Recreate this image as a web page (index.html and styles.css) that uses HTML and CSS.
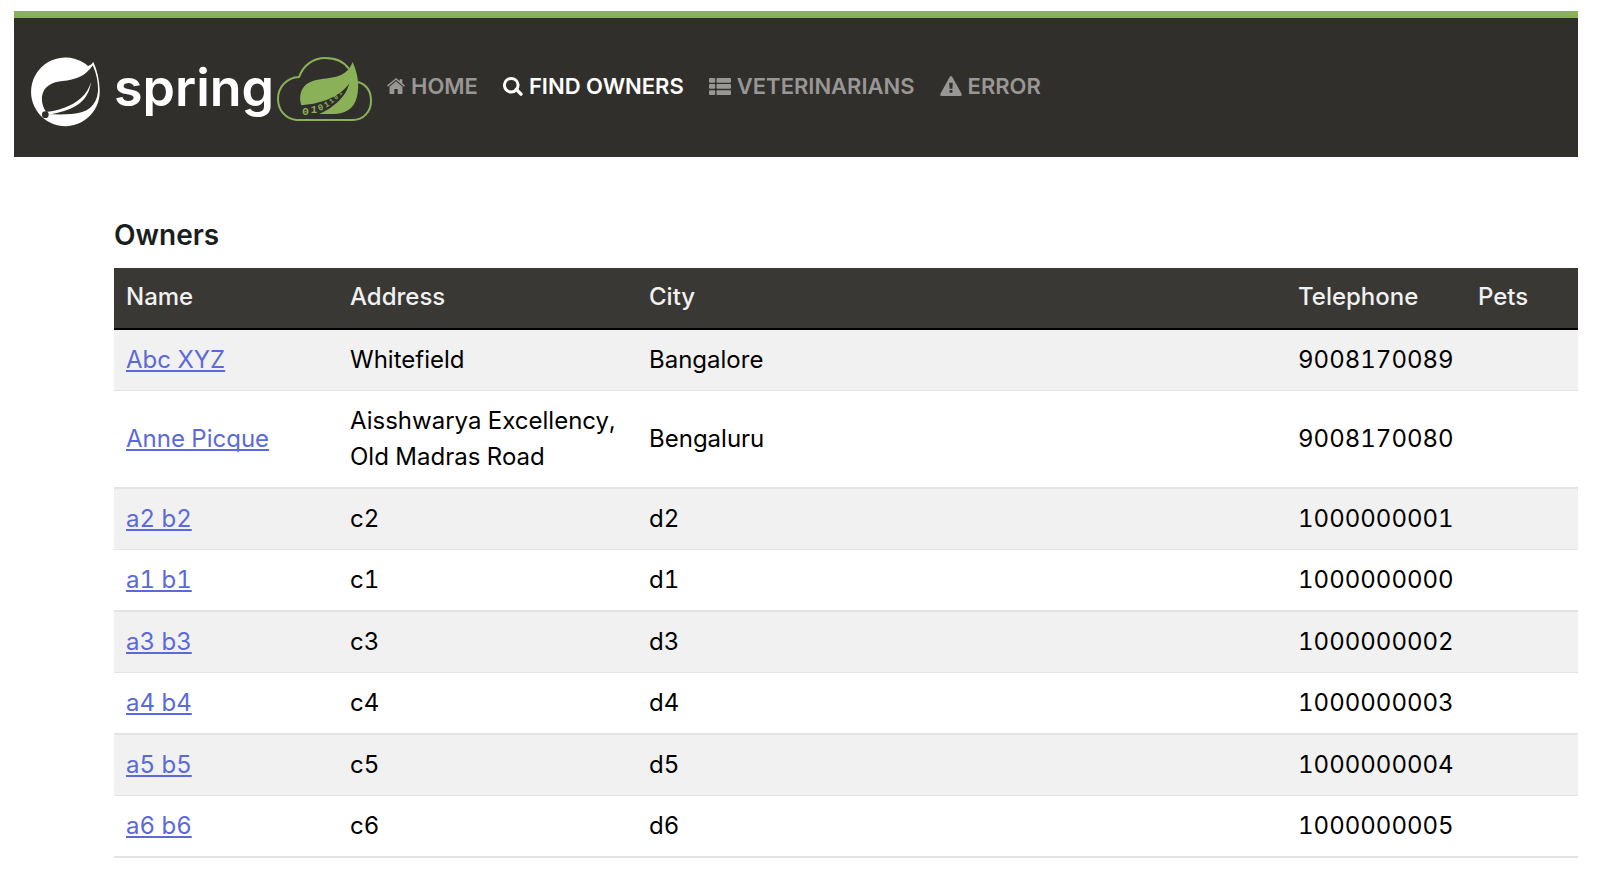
FILE: index.html
```html
<!DOCTYPE html>
<html lang="en">
<head>
<meta charset="utf-8">
<meta name="viewport" content="width=device-width, initial-scale=1">
<title>PetClinic - Owners</title>
<link rel="stylesheet" href="styles.css">
</head>
<body>
<header class="navbar">
  <a class="brand" href="#">
    <svg class="brand-mark" viewBox="93 168 210 213" aria-hidden="true">
      <path fill="#fff" d="M264 198A103 103 0 1 0 299 270C298 240 292 212 280 186C276 192 271 196 264 198Z"/>
      <path fill="#312f2b" d="M278 196C290 222 295 250 294 274C290 318 262 339 215 342C190 344 168 343 145 343C132 330 124 310 126 290C130 258 158 246 188 243C226 240 258 228 278 196Z"/>
      <path fill="#fff" d="M273 246C262 284 233 309 193 323C171 331 153 334 137 336L148 344C178 337 208 331 232 315C258 298 269 274 273 246Z"/>
      <circle cx="136" cy="344" r="10" fill="#312f2b"/>
    </svg>
    <span class="brand-name">spring</span>
    <svg class="brand-cloud" viewBox="828 168 291 198" aria-hidden="true">
      <path fill="none" stroke="#8bb158" stroke-width="6" d="M889 360C856 356 834 330 834 297C834 259 862 233 897 231C910 196 939 174 976 174C1007 174 1032 185 1047 207M1074 246C1100 254 1113 276 1113 303C1113 334 1091 360 1058 360H889"/>
      <path fill="#8bb158" d="M1058 186C1074 222 1079 256 1071 290C1062 327 1035 342 1000 342H958C990 329 1037 296 1048 250C1024 286 972 311 904 316C896 288 901 256 938 243C979 229 1035 244 1058 186Z"/>
      <g class="brand-bits">
        <text x="906" y="344" font-size="35">0</text>
        <text x="932" y="340" font-size="32">1</text>
        <text font-size="27" transform="translate(957 333) rotate(-20)">0</text>
        <text font-size="24" transform="translate(977 323) rotate(-30)">1</text>
        <text font-size="21" transform="translate(994 312) rotate(-38)">1</text>
        <text font-size="19" transform="translate(1008 300) rotate(-43)">0</text>
        <text font-size="17" transform="translate(1021 287) rotate(-48)">1</text>
      </g>
    </svg>
  </a>
  <nav class="menu" aria-label="Main">
    <a class="menu-link" href="#">
      <svg class="icon icon-home" viewBox="0 0 18 16" aria-hidden="true"><path d="M9 3.2 15.5 8.7V15.2Q15.5 16 14.7 16H10.7V11H7.3V16H3.3Q2.5 16 2.5 15.2V8.7ZM9 0 12.7 3.1V1.2H15.3V5.3L18 7.6 17.1 8.7 9 1.9 .9 8.7 0 7.6Z"/></svg>
      <span>HOME</span>
    </a>
    <a class="menu-link active" href="#" aria-current="page">
      <svg class="icon icon-search" viewBox="0 0 20 20" aria-hidden="true"><path fill="none" stroke="currentColor" stroke-width="3" d="M15 8.4A6.8 6.8 0 1 1 1.5 8.4 6.8 6.8 0 0 1 15 8.4Z"/><path fill="none" stroke="currentColor" stroke-width="3.4" stroke-linecap="round" d="m13.3 13.4 4.7 4.7"/></svg>
      <span>FIND OWNERS</span>
    </a>
    <a class="menu-link" href="#">
      <svg class="icon icon-list" viewBox="0 0 22 17" aria-hidden="true"><rect width="6.2" height="4.7" rx="1"/><rect y="6.1" width="6.2" height="4.7" rx="1"/><rect y="12.2" width="6.2" height="4.7" rx="1"/><rect x="7.5" width="14.5" height="4.7" rx="1"/><rect x="7.5" y="6.1" width="14.5" height="4.7" rx="1"/><rect x="7.5" y="12.2" width="14.5" height="4.7" rx="1"/></svg>
      <span>VETERINARIANS</span>
    </a>
    <a class="menu-link" href="#">
      <svg class="icon icon-warning" viewBox="0 0 22 20" aria-hidden="true"><path fill-rule="evenodd" d="M9.8.7Q11-.6 12.2.7L21.6 17.8Q22.2 19.8 20.3 20H1.7Q-.2 19.8.4 17.8ZM9.2 6.7 9.6 12.7H12.4L12.8 6.7ZM9.6 14.1V16.8H12.4V14.1Z"/></svg>
      <span>ERROR</span>
    </a>
  </nav>
</header>
<main class="content">
  <h2 class="title">Owners</h2>
  <table class="owners">
    <colgroup><col class="col-name"><col class="col-address"><col><col class="col-phone"><col class="col-pets"></colgroup>
    <thead>
      <tr><th scope="col">Name</th><th scope="col">Address</th><th scope="col">City</th><th scope="col">Telephone</th><th scope="col">Pets</th></tr>
    </thead>
    <tbody>
      <tr><td><a href="#">Abc XYZ</a></td><td>Whitefield</td><td>Bangalore</td><td>9008170089</td><td></td></tr>
      <tr><td><a href="#">Anne Picque</a></td><td>Aisshwarya Excellency, Old Madras Road</td><td>Bengaluru</td><td>9008170080</td><td></td></tr>
      <tr><td><a href="#">a2 b2</a></td><td>c2</td><td>d2</td><td>1000000001</td><td></td></tr>
      <tr><td><a href="#">a1 b1</a></td><td>c1</td><td>d1</td><td>1000000000</td><td></td></tr>
      <tr><td><a href="#">a3 b3</a></td><td>c3</td><td>d3</td><td>1000000002</td><td></td></tr>
      <tr><td><a href="#">a4 b4</a></td><td>c4</td><td>d4</td><td>1000000003</td><td></td></tr>
      <tr><td><a href="#">a5 b5</a></td><td>c5</td><td>d5</td><td>1000000004</td><td></td></tr>
      <tr><td><a href="#">a6 b6</a></td><td>c6</td><td>d6</td><td>1000000005</td><td></td></tr>
    </tbody>
  </table>
</main>
</body>
</html>
```
FILE: styles.css
```css
* { box-sizing: border-box; }

body {
  margin: 0;
  padding: 11px 22px 24px 14px;
  background: #fff;
  color: #191e1e;
  font-family: Inter, "Open Sans", sans-serif;
  font-size: 24px;
  line-height: 36px;
}

.navbar {
  display: flex;
  align-items: flex-start;
  gap: 14px;
  padding: 38px 17px 30px;
  border-top: 7px solid #8bb158;
  background: #312f2b;
}

.brand {
  display: flex;
  align-items: flex-start;
  color: #fff;
  text-decoration: none;
}

.brand-mark { width: 70px; height: 71px; }

.brand-name {
  margin-left: 13px;
  width: 162px;
  font-size: 52px;
  font-weight: 600;
  line-height: 64px;
}

.brand-cloud { width: 97px; height: 66px; }

.brand-bits {
  fill: #8bb158;
  font-family: "Liberation Mono", monospace;
  font-weight: 700;
}

.menu {
  display: flex;
  gap: 25px;
  padding-top: 12px;
}

.menu-link {
  display: flex;
  align-items: center;
  gap: 6px;
  color: #999795;
  font-size: 22px;
  font-weight: 600;
  line-height: 36px;
  text-decoration: none;
}

.menu-link.active { color: #fff; }

.icon { fill: currentColor; }
.icon-home { width: 18px; height: 16px; }
.icon-search { width: 20px; height: 20px; }
.icon-list { width: 22px; height: 17px; }
.icon-warning { width: 22px; height: 20px; }

.content { padding: 60px 0 0 100px; }

.title {
  margin: 0 0 15px;
  font-size: 28px;
  font-weight: 600;
  line-height: 36px;
}

.owners {
  width: 100%;
  table-layout: fixed;
  border-spacing: 0;
  font-feature-settings: "tnum";
}

.col-name { width: 224px; }
.col-address { width: 299px; }
.col-phone { width: 180px; }
.col-pets { width: 112px; }

.owners th,
.owners td {
  padding: 12px;
  text-align: left;
  vertical-align: middle;
}

.owners th {
  padding: 11px 12px 13px;
  border-bottom: 2px solid #000;
  background: #3a3834;
  color: #f1f1f1;
  font-weight: 500;
}

.owners td {
  border-bottom: 2px solid #e3e3e3;
  color: #000;
}

.owners tbody tr:nth-child(odd) td {
  border-bottom-width: 1px;
  background: #f1f1f1;
}

.owners a {
  color: #5b6ad8;
  text-decoration: underline;
  text-decoration-thickness: 2px;
  text-underline-offset: 2px;
  text-decoration-skip-ink: none;
}
```
